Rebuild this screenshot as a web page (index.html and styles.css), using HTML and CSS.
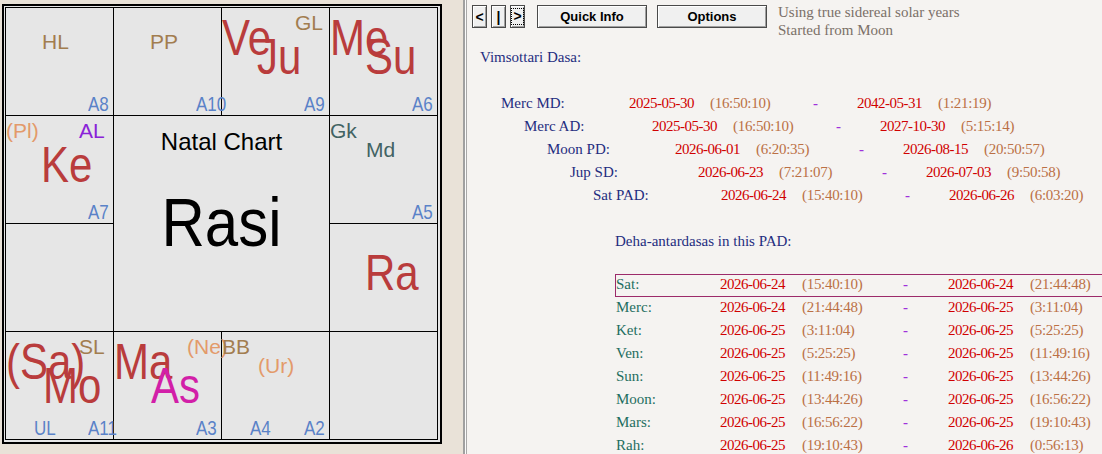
FILE: index.html
```html
<!DOCTYPE html>
<html>
	<head>
		<meta charset="UTF-8">
		<title>Natal Chart</title>
		<link rel="stylesheet" href="styles.css">
	</head>
	<body>
		<div class="left">
			<div class="chart">
				<div class="grid">
					<div class="cell">
						<span class="sm s-b c-br">HL</span>
						<span class="hs h-r">A8</span>
					</div>
					<div class="cell">
						<span class="sm s-b c-br">PP</span>
						<span class="hs h-r">A10</span>
					</div>
					<div class="cell">
						<span class="big p-v">Ve</span>
						<span class="big p-j">Ju</span>
						<span class="sm s-c c-br">GL</span>
						<span class="hs h-r">A9</span>
					</div>
					<div class="cell">
						<span class="big p-v">Me</span>
						<span class="big p-j">Su</span>
						<span class="hs h-r">A6</span>
					</div>

					<div class="cell">
						<span class="sm s-a c-or">(Pl)</span>
						<span class="sm s-c c-pu">AL</span>
						<span class="big p-j">Ke</span>
						<span class="hs h-r">A7</span>
					</div>
					<div class="center">
						<div class="title">Natal Chart</div>
						<div class="rasi">Rasi</div>
					</div>
					<div class="cell">
						<span class="sm s-a c-sl">Gk</span>
						<span class="sm s-b c-sl">Md</span>
						<span class="hs h-r">A5</span>
					</div>

					<div class="cell"></div>
					<div class="cell">
						<span class="big p-j">Ra</span>
					</div>

					<div class="cell">
						<span class="big p-v">(Sa)</span>
						<span class="sm s-c c-br">SL</span>
						<span class="big p-low">Mo</span>
						<span class="hs h-l">UL</span>
						<span class="hs h-r">A11</span>
					</div>
					<div class="cell">
						<span class="big p-v">Ma</span>
						<span class="sm s-c c-or">(Ne)</span>
						<span class="big p-low c-mg">As</span>
						<span class="hs h-r">A3</span>
					</div>
					<div class="cell">
						<span class="sm s-a c-br">BB</span>
						<span class="sm s-b c-or">(Ur)</span>
						<span class="hs h-l">A4</span>
						<span class="hs h-r">A2</span>
					</div>
					<div class="cell"></div>
				</div>
			</div>
		</div>
		<div class="sep"></div>
		<div class="right">
			<div class="topbar">
				<button class="btn arrow">&lt;</button>
				<button class="btn arrow">|</button>
				<button class="btn arrow"><span class="focus">&gt;</span></button>
				<button class="btn wide first">Quick Info</button>
				<button class="btn wide">Options</button>
				<div class="note">Using true sidereal solar years<br>Started from Moon</div>
			</div>

			<div class="content">
				<div class="heading">Vimsottari Dasa:</div>

				<div class="dasa lv0"><span class="lbl">Merc MD:</span><span class="date">2025-05-30</span><span class="time">(16:50:10)</span><span class="dash">-</span><span class="date">2042-05-31</span><span class="time">(1:21:19)</span></div>
				<div class="dasa lv1"><span class="lbl">Merc AD:</span><span class="date">2025-05-30</span><span class="time">(16:50:10)</span><span class="dash">-</span><span class="date">2027-10-30</span><span class="time">(5:15:14)</span></div>
				<div class="dasa lv2"><span class="lbl">Moon PD:</span><span class="date">2026-06-01</span><span class="time">(6:20:35)</span><span class="dash">-</span><span class="date">2026-08-15</span><span class="time">(20:50:57)</span></div>
				<div class="dasa lv3"><span class="lbl">Jup SD:</span><span class="date">2026-06-23</span><span class="time">(7:21:07)</span><span class="dash">-</span><span class="date">2026-07-03</span><span class="time">(9:50:58)</span></div>
				<div class="dasa lv4"><span class="lbl">Sat PAD:</span><span class="date">2026-06-24</span><span class="time">(15:40:10)</span><span class="dash">-</span><span class="date">2026-06-26</span><span class="time">(6:03:20)</span></div>

				<div class="deha-head">Deha-antardasas in this PAD:</div>

				<div class="deha current"><span class="lbl">Sat:</span><span class="date">2026-06-24</span><span class="time">(15:40:10)</span><span class="dash">-</span><span class="date">2026-06-24</span><span class="time">(21:44:48)</span></div>
				<div class="deha"><span class="lbl">Merc:</span><span class="date">2026-06-24</span><span class="time">(21:44:48)</span><span class="dash">-</span><span class="date">2026-06-25</span><span class="time">(3:11:04)</span></div>
				<div class="deha"><span class="lbl">Ket:</span><span class="date">2026-06-25</span><span class="time">(3:11:04)</span><span class="dash">-</span><span class="date">2026-06-25</span><span class="time">(5:25:25)</span></div>
				<div class="deha"><span class="lbl">Ven:</span><span class="date">2026-06-25</span><span class="time">(5:25:25)</span><span class="dash">-</span><span class="date">2026-06-25</span><span class="time">(11:49:16)</span></div>
				<div class="deha"><span class="lbl">Sun:</span><span class="date">2026-06-25</span><span class="time">(11:49:16)</span><span class="dash">-</span><span class="date">2026-06-25</span><span class="time">(13:44:26)</span></div>
				<div class="deha"><span class="lbl">Moon:</span><span class="date">2026-06-25</span><span class="time">(13:44:26)</span><span class="dash">-</span><span class="date">2026-06-25</span><span class="time">(16:56:22)</span></div>
				<div class="deha"><span class="lbl">Mars:</span><span class="date">2026-06-25</span><span class="time">(16:56:22)</span><span class="dash">-</span><span class="date">2026-06-25</span><span class="time">(19:10:43)</span></div>
				<div class="deha"><span class="lbl">Rah:</span><span class="date">2026-06-25</span><span class="time">(19:10:43)</span><span class="dash">-</span><span class="date">2026-06-26</span><span class="time">(0:56:13)</span></div>
			</div>
		</div>
	</body>
</html>
```

FILE: styles.css
```css
body{
	margin: 0;
	width: 1102px;
	height: 454px;
	overflow: hidden;
	display: flex;
	font-family: "Liberation Serif", "Times New Roman", serif;
}
.left{
	width: 463px;
	height: 454px;
	background: #e9e2d8;
}
.sep{
	width: 1px;
	height: 454px;
	background: #fbfbfb;
	border-left: 2px solid #a0a0a0;
	border-right: 1px solid #a8a8a8;
}
.right{
	flex: 1;
	height: 454px;
	overflow: hidden;
	background: #f5f3f1;
}

/* chart */
.chart{
	width: max-content;
	margin: 4px 0 0 2px;
	border: 2px solid #000;
	padding: 1px 2px 2px 1px;
	background: #e6e6e6;
}
.grid{
	display: grid;
	grid-template-columns: repeat(4, 107px);
	grid-template-rows: repeat(4, 107px);
	gap: 1px;
	border: 1px solid #000;
	background: #000;
	font-family: "Liberation Sans", Arial, sans-serif;
}
.cell{
	position: relative;
	background: #e6e6e6;
}
.cell span{
	position: absolute;
	z-index: 1;
	line-height: 1;
	white-space: nowrap;
	transform-origin: 0 0;
}
.big{
	font-size: 42px;
	transform: scaleY(1.2);
	color: #b93c3c;
}
.sm{
	font-size: 21px;
}
.hs{
	top: 87px;
	font-size: 17px;
	transform: scaleY(1.15);
	color: #5a82c8;
}
.h-l{ left: 28px; }
.h-r{ left: 82px; }
.p-v{ left: 0; top: 5px; }
.p-j{ left: 35px; top: 24px; }
.p-low{ left: 37px; top: 29px; }
.s-a{ left: 0; top: 4px; }
.s-b{ left: 36px; top: 23px; }
.s-c{ left: 73px; top: 4px; }
.c-br{ color: #a27d4f; }
.c-or{ color: #e39a6a; }
.c-pu{ color: #8a22d8; }
.c-sl{ color: #426363; }
.c-mg{ color: #d21fa8; }

.center{
	grid-column: 2 / 4;
	grid-row: 2 / 4;
	background: #e6e6e6;
	text-align: center;
	padding-top: 14px;
}
.title{
	font-size: 24px;
	line-height: 24px;
}
.rasi{
	margin-top: 35px;
	font-size: 60px;
	line-height: 1;
	transform: scaleY(1.13);
	transform-origin: 50% 0;
}

/* right side */
.topbar{
	height: 46px;
	box-sizing: border-box;
	padding: 3px 0 0 5px;
	display: flex;
	align-items: flex-start;
}
.btn{
	height: 23px;
	margin: 2px 4px 0 0;
	padding: 0;
	background: #f0f0f0;
	border: 1px solid #4a4a4a;
	box-shadow: inset 1px 1px #fff, inset -1px -1px #a0a0a0;
	font: bold 13px "Liberation Sans", Arial, sans-serif;
	color: #000;
}
.arrow{
	width: 15px;
	font-size: 14px;
}
.focus{
	display: inline-block;
	border: 1px dotted #000;
	line-height: 15px;
	padding: 0 1px;
}
.wide{
	width: 110px;
	margin-right: 10px;
}
.first{
	margin-left: 8px;
}
.note{
	margin-left: 1px;
	font-size: 15px;
	line-height: 18px;
	color: #7b7068;
}
.content{
	padding-left: 13px;
	font-size: 15px;
	line-height: 23px;
}
.heading{
	color: #1f2d80;
	margin-bottom: 23px;
}
.dasa{
	display: grid;
	grid-template-columns: 128px 81px 103px 44px 81px auto;
	white-space: nowrap;
}
.dasa .lbl{ color: #1f2d80; }
.lv0{ margin-left: 21px; }
.lv1{ margin-left: 44px; }
.lv2{ margin-left: 67px; }
.lv3{ margin-left: 90px; }
.lv4{ margin-left: 113px; margin-bottom: 23px; }
.date{
	color: #d00000;
	letter-spacing: -0.5px;
}
.time{
	color: #bb7045;
	letter-spacing: -0.3px;
}
.dash{
	color: #a030dc;
	font-weight: bold;
}
.deha-head{
	margin-left: 135px;
	margin-bottom: 21px;
	color: #1f2d80;
}
.deha{
	display: grid;
	grid-template-columns: 104px 82px 101px 45px 82px auto;
	width: 600px;
	height: 23px;
	box-sizing: border-box;
	margin-left: 135px;
	border: 1px solid transparent;
	border-right: none;
	line-height: 18px;
	white-space: nowrap;
}
.deha .lbl{ color: #1e6e60; }
.current{
	border-color: #9c2a6a;
}
```
